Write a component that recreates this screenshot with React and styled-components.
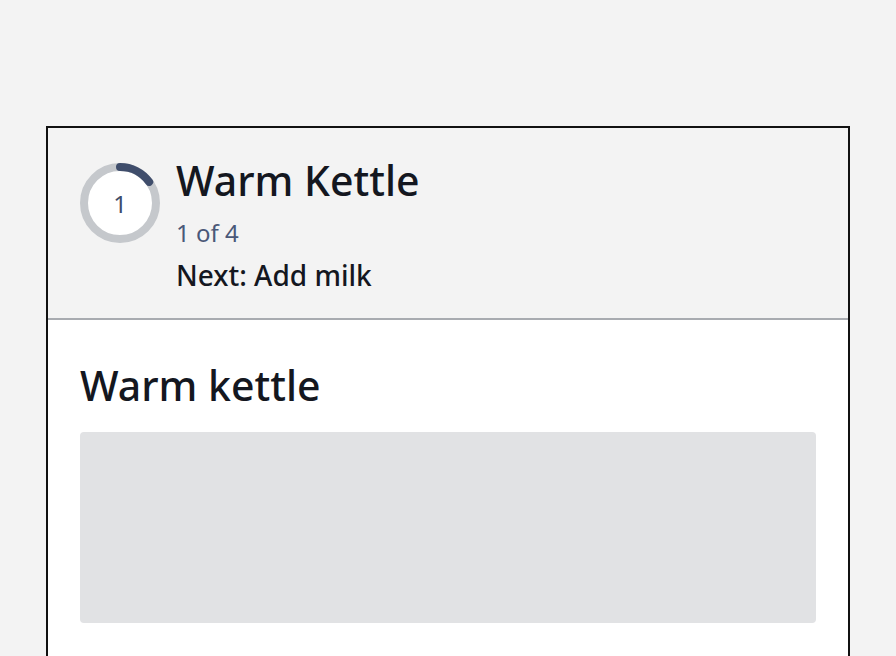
import React from "react";
import styled, { createGlobalStyle } from "styled-components";

const GlobalStyle = createGlobalStyle`
  html, body {
    margin: 0;
    padding: 0;
    background: #f3f3f3;
    font-family: "Noto Sans", "Open Sans", sans-serif;
    color: #14171f;
  }
`;

const Page = styled.div`
  padding: 126px 46px 0;
  height: 656px;
  box-sizing: border-box;
  overflow: hidden;
`;

const Card = styled.section`
  border: 2px solid #111;
  background: #fff;
  min-height: 700px;
`;

const Header = styled.header`
  display: flex;
  gap: 16px;
  align-items: flex-start;
  padding: 28px 32px 25px;
  background: #f3f3f3;
  border-bottom: 2px solid #a8abb0;
`;

const RingWrap = styled.div`
  position: relative;
  width: 80px;
  height: 80px;
  margin-top: 7px;
  flex-shrink: 0;
`;

const RingNumber = styled.span`
  position: absolute;
  inset: 0;
  display: flex;
  align-items: center;
  justify-content: center;
  font-size: 24px;
  color: #3f4d6b;
`;

const Info = styled.div`
  display: flex;
  flex-direction: column;
`;

const Title = styled.h1`
  margin: 0;
  font-size: 41px;
  font-weight: 500;
  line-height: 48px;
  color: #14171f;
`;

const Count = styled.div`
  margin-top: 13px;
  font-size: 24px;
  line-height: 32px;
  color: #4a5878;
`;

const Next = styled.div`
  margin-top: 8px;
  font-size: 28px;
  font-weight: 500;
  line-height: 36px;
  color: #14171f;
`;

const Body = styled.div`
  padding: 32px;
`;

const Heading = styled.h2`
  margin: 0 0 14px;
  font-size: 41px;
  font-weight: 500;
  line-height: 66px;
  color: #14171f;
`;

const Placeholder = styled.div`
  height: 191px;
  border-radius: 4px;
  background: #e1e2e4;
`;

const ProgressRing = ({ step }) => {
  const r = 36;
  const c = 2 * Math.PI * r;
  // arc drawn a bit short of the step fraction, like the reference
  const arc = c * 0.15;
  return (
    <RingWrap>
      <svg width="80" height="80" viewBox="0 0 80 80">
        <circle cx="40" cy="40" r={r} fill="#fff" stroke="#c5c8cc" strokeWidth="8" />
        <circle
          cx="40"
          cy="40"
          r={r}
          fill="none"
          stroke="#3f4d6b"
          strokeWidth="8"
          strokeLinecap="round"
          strokeDasharray={`${arc} ${c}`}
          transform="rotate(-90 40 40)"
        />
      </svg>
      <RingNumber>{step}</RingNumber>
    </RingWrap>
  );
};

const App = () => {
  return (
    <>
      <GlobalStyle />
      <Page>
        <Card>
          <Header>
            <ProgressRing step={1} />
            <Info>
              <Title>Warm Kettle</Title>
              <Count>1 of 4</Count>
              <Next>Next: Add milk</Next>
            </Info>
          </Header>
          <Body>
            <Heading>Warm kettle</Heading>
            <Placeholder />
          </Body>
        </Card>
      </Page>
    </>
  );
};

export default App;
